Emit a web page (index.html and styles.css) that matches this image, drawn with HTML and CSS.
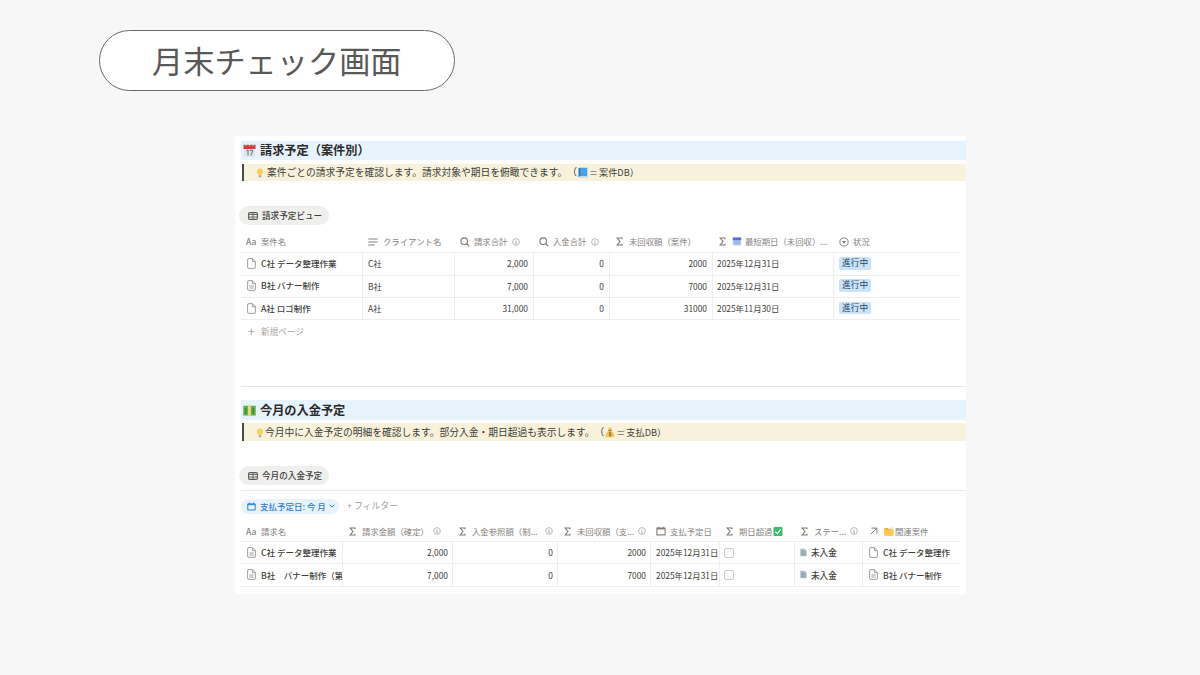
FILE: index.html
```html
<!DOCTYPE html>
<html lang="ja">
<head>
    <meta charset="UTF-8">
    <meta name="viewport" content="width=device-width, initial-scale=1.0">
    <title>月末チェック画面</title>
    <link rel="stylesheet" href="styles.css">
</head>
<body>
    <!-- Shared icons -->
    <svg class="sprite" width="0" height="0">
        <symbol id="calendar" viewBox="0 0 13 13"><path d="M1 3h11v9.700H1z" fill="#dfe4e9"/><path d="M.5 .8h12v4.200H.5z" fill="#e0313f"/><path d="M3 .3v2M6.500 .3v2M10 .3v2" stroke="#f4c9cc" stroke-width=".8"/><path d="M3.500 6.700l1.500-.7v5.500M6.700 6.300h3L8 11.500" fill="none" stroke="#65717b" stroke-width="1"/></symbol>
        <symbol id="bulb" viewBox="0 0 8 10"><path d="M4 .4a3.200 3.200 0 0 0-2 5.700l.5 1.200h3l.5-1.200A3.200 3.200 0 0 0 4 .4z" fill="#fbcf5a"/><path d="M2.700 7.300h2.600v1.500L4 9.700 2.700 8.800z" fill="#91b1c4"/></symbol>
        <symbol id="book" viewBox="0 0 10 11"><path d="M1.500 .8h7.800v9.400H1.200z" fill="#49a3e8"/><path d="M.5 1h1.800v9H.5z" fill="#2577bd"/><path d="M1.500 9h7.800v1H1.500z" fill="#b9def5"/></symbol>
        <symbol id="cash" viewBox="0 0 13 11"><path d="M.3 .8h12.400v9.700H.3z" fill="#5fac46"/><path d="M4.900 .5h3v10.200h-3z" fill="#ead978"/><path d="M2.700 3v6M10.300 3v6" stroke="#3f8732" stroke-width="1.300"/></symbol>
        <symbol id="moneybag" viewBox="0 0 9 10"><path d="M3 .5h3L5.500 3C8 5 9 7 8.300 9.300H.7C0 7 1 5 3.500 3z" fill="#f3c65b"/><path d="M3 3h3" stroke="#9a7434"/><path d="M5.600 5.200H3.900v1.300h1.500v1.400H3.500M4.500 4.500v4" fill="none" stroke="#8a6c39" stroke-width=".7"/></symbol>
        <symbol id="grid" viewBox="0 0 10 8"><rect x=".6" y=".6" width="8.800" height="6.800" rx="1.200" fill="none" stroke="#5d5b57" stroke-width="1.100"/><path d="M.6 2.500h8.800M.6 5h8.800M5 .6v6.800" stroke="#5d5b57" stroke-width=".9"/></symbol>
        <symbol id="lines" viewBox="0 0 10 8"><path d="M.3 1h9.300M.3 4h9.300M.3 7h6.400" stroke="#85827e" stroke-width="1"/></symbol>
        <symbol id="search" viewBox="0 0 10 10"><circle cx="4.200" cy="4.200" r="3.300" fill="none" stroke="#7d7a76" stroke-width="1.100"/><path d="M6.700 6.700L9.300 9.300" stroke="#7d7a76" stroke-width="1.200"/></symbol>
        <symbol id="sigma" viewBox="0 0 7 9"><path d="M6 2.200V1H1.200l2.800 3.500L1.200 8H6V6.800" fill="none" stroke="#7d7a76" stroke-width="1.150"/></symbol>
        <symbol id="info" viewBox="0 0 8 8"><circle cx="4" cy="4" r="3.400" fill="none" stroke="#a09d99" stroke-width=".7"/><path d="M3.300 3.600H4v2.200M3.200 5.800h1.700M4 1.900v.8" fill="none" stroke="#a09d99" stroke-width=".7"/></symbol>
        <symbol id="target" viewBox="0 0 10 10"><circle cx="5" cy="5" r="4.100" fill="none" stroke="#7d7a76" stroke-width=".9"/><path d="M3 4h4L5 6.700z" fill="#7d7a76"/></symbol>
        <symbol id="page" viewBox="0 0 9 11"><path d="M5.400 .6H2A1.300 1.300 0 0 0 .6 2v7A1.300 1.300 0 0 0 2 10.400h5A1.300 1.300 0 0 0 8.400 9V3.700zM5.400 .6v3.100h3" fill="none" stroke="#979490" stroke-width=".9"/></symbol>
        <symbol id="doc" viewBox="0 0 9 11"><path d="M5.400 .6H2A1.300 1.300 0 0 0 .6 2v7A1.300 1.300 0 0 0 2 10.400h5A1.300 1.300 0 0 0 8.400 9V3.700zM5.400 .6v3.100h3M2.300 6h4.400M2.300 8h4.400" fill="none" stroke="#979490" stroke-width=".9"/></symbol>
        <symbol id="date" viewBox="0 0 10 9"><path d="M.9 1.600h8.200v6.800H.9zM.9 2.500h8.200M2.800 .2v2M7.200 .2v2" fill="none" stroke="currentColor" stroke-width="1.100"/></symbol>
        <symbol id="minical" viewBox="0 0 9 9"><path d="M.3 .5h8.400v8H.3z" fill="#b5cff3"/><path d="M.3 .5h8.400v2.800H.3z" fill="#6467d8"/><path d="M1.500 4.800h6M1.500 6.500h6" stroke="#7aa6e5" stroke-width=".8"/></symbol>
        <symbol id="check" viewBox="0 0 9 9"><rect width="9" height="9" rx="1" fill="#35bd69"/><path d="M1.900 4.700l2 1.900L7.200 2.400" fill="none" stroke="#fff" stroke-width="1.200"/></symbol>
        <symbol id="arrow" viewBox="0 0 8 8"><path d="M.8 7.200L6.800 1.200M1.500 1.100h5.400v5.400" fill="none" stroke="#7d7a76" stroke-width="1"/></symbol>
        <symbol id="folder" viewBox="0 0 10 9"><path d="M.4 1h3.500l1 1H9v6.500H.4z" fill="#f4ae35"/><path d="M6 .5h3v2H6z" fill="#e7e5d9"/><path d="M.4 3h9.200v5.500H.4z" fill="#fbc64b"/></symbol>
        <symbol id="status" viewBox="0 0 7 9"><path d="M.3 .8h4.300l2 2v5.500H.3z" fill="#a9bbc2"/><path d="M1.300 3.300h3.500M1.300 5h4.300M1.300 6.700h4.300" stroke="#7796a3" stroke-width=".6"/></symbol>
    </svg>

    <h1 class="page-title">月末チェック画面</h1>

    <main class="board">
        <section class="billing">
            <h2 class="heading"><svg class="i13"><use href="#calendar"/></svg>請求予定（案件別）</h2>
            <p class="note"><svg class="bulb"><use href="#bulb"/></svg><span class="gap-l">案件ごとの請求予定を確認します。請求対象や期日を俯瞰できます。（</span><svg class="book"><use href="#book"/></svg><span class="equals">＝</span><span class="db">案件DB）</span></p>
            <div class="view-tab"><svg class="grid-icon"><use href="#grid"/></svg>請求予定ビュー</div>

            <div class="table projects">
                <div class="row head">
                    <div><b class="aa">Aa</b>案件名</div>
                    <div><svg class="type wide"><use href="#lines"/></svg>クライアント名</div>
                    <div><svg class="type"><use href="#search"/></svg>請求合計<svg class="info"><use href="#info"/></svg></div>
                    <div><svg class="type"><use href="#search"/></svg>入金合計<svg class="info"><use href="#info"/></svg></div>
                    <div><svg class="sigma"><use href="#sigma"/></svg>未回収額（案件）</div>
                    <div><svg class="sigma"><use href="#sigma"/></svg><svg class="emoji"><use href="#minical"/></svg>最短期日（未回収）...</div>
                    <div><svg class="type"><use href="#target"/></svg>状況</div>
                </div>
                <div class="row">
                    <div class="name"><svg class="file"><use href="#page"/></svg>C社 データ整理作業</div>
                    <div>C社</div><div class="num">2,000</div><div class="num">0</div><div class="num">2000</div><div class="day">2025年12月31日</div>
                    <div><span class="tag">進行中</span></div>
                </div>
                <div class="row">
                    <div class="name"><svg class="file"><use href="#doc"/></svg>B社 バナー制作</div>
                    <div>B社</div><div class="num">7,000</div><div class="num">0</div><div class="num">7000</div><div class="day">2025年12月31日</div>
                    <div><span class="tag">進行中</span></div>
                </div>
                <div class="row">
                    <div class="name"><svg class="file"><use href="#page"/></svg>A社 ロゴ制作</div>
                    <div>A社</div><div class="num">31,000</div><div class="num">0</div><div class="num">31000</div><div class="day">2025年11月30日</div>
                    <div><span class="tag">進行中</span></div>
                </div>
            </div>
            <div class="new-page"><span class="plus">+</span>新規ページ</div>
        </section>

        <section class="payments">
            <h2 class="heading"><svg class="i13"><use href="#cash"/></svg>今月の入金予定</h2>
            <p class="note"><svg class="bulb"><use href="#bulb"/></svg><span>今月中に入金予定の明細を確認します。部分入金・期日超過も表示します。（</span><svg class="book"><use href="#moneybag"/></svg><span class="equals">＝</span><span class="db">支払DB）</span></p>
            <div class="view-tab"><svg class="grid-icon"><use href="#grid"/></svg>今月の入金予定</div>

            <div class="filters">
                <span class="chip"><svg class="chip-icon"><use href="#date"/></svg>支払予定日: 今 月<svg class="chevron" viewBox="0 0 6 4"><path d="M.7 .7L3 3 5.300 .7" fill="none" stroke="#2b7fd0" stroke-width=".9"/></svg></span>
                <span class="add-filter">+ フィルター</span>
            </div>

            <div class="table dues">
                <div class="row head">
                    <div><b class="aa">Aa</b>請求名</div>
                    <div><svg class="sigma"><use href="#sigma"/></svg>請求金額（確定）<svg class="info"><use href="#info"/></svg></div>
                    <div><svg class="sigma"><use href="#sigma"/></svg>入金参照額（制...<svg class="info push"><use href="#info"/></svg></div>
                    <div><svg class="sigma"><use href="#sigma"/></svg>未回収額（支...<svg class="info push"><use href="#info"/></svg></div>
                    <div><svg class="type"><use href="#date"/></svg>支払予定日</div>
                    <div><svg class="sigma"><use href="#sigma"/></svg>期日超過<svg class="emoji"><use href="#check"/></svg></div>
                    <div><svg class="sigma"><use href="#sigma"/></svg>ステー...<svg class="info push"><use href="#info"/></svg></div>
                    <div><svg class="arrow"><use href="#arrow"/></svg><svg class="folder"><use href="#folder"/></svg>関連案件</div>
                </div>
                <div class="row">
                    <div class="name"><svg class="file"><use href="#doc"/></svg>C社 データ整理作業</div>
                    <div class="num">2,000</div><div class="num">0</div><div class="num">2000</div><div>2025年12月31日</div>
                    <div><i class="checkbox"></i></div>
                    <div class="state"><svg class="status"><use href="#status"/></svg>未入金</div>
                    <div class="name"><svg class="file"><use href="#page"/></svg>C社 データ整理作</div>
                </div>
                <div class="row">
                    <div class="name"><svg class="file"><use href="#doc"/></svg>B社　バナー制作（第</div>
                    <div class="num">7,000</div><div class="num">0</div><div class="num">7000</div><div>2025年12月31日</div>
                    <div><i class="checkbox"></i></div>
                    <div class="state"><svg class="status"><use href="#status"/></svg>未入金</div>
                    <div class="name"><svg class="file"><use href="#doc"/></svg>B社 バナー制作</div>
                </div>
            </div>
        </section>
    </main>
</body>
</html>
```
FILE: styles.css
```css
* {
    box-sizing: border-box;
}

body {
    margin: 0;
    height: 675px;
    padding: 30px 0 0 99px;
    overflow: hidden;
    background: #f7f7f7;
    color: #403e3a;
    font-family: "Noto Sans CJK JP", "Noto Sans", sans-serif;
    font-size: 8.4px;
    line-height: 1;
}

svg {
    display: block;
    flex: none;
}

.sprite {
    position: absolute;
}

.page-title {
    display: flex;
    align-items: center;
    width: 356px;
    height: 61px;
    margin: 0;
    padding: 0 0 1px 52px;
    border: 1px solid #6a6a6a;
    border-radius: 31px;
    background: #fff;
    color: #585858;
    font-size: 31.2px;
    font-weight: 400;
}

.board {
    width: 731px;
    height: 458px;
    margin: 45px 0 0 136px;
    padding: 5px 0 0 6px;
    background: #fff;
}

.billing {
    height: 246px;
    margin-bottom: 13px;
    border-bottom: 1px solid #e6e6e6;
}

.heading {
    display: flex;
    align-items: center;
    gap: 4px;
    height: 19px;
    margin: 0 0 4px;
    padding-left: 2px;
    background: #e6f2fc;
    color: #2c2c2b;
    font-size: 12.2px;
    font-weight: 700;
}

.payments .heading {
    height: 20px;
    margin-bottom: 3px;
}

.i13 {
    width: 13px;
    height: 13px;
}

/* Callout under each heading */
.note {
    display: flex;
    align-items: center;
    height: 17px;
    margin: 0 0 25px 1px;
    padding-left: 12px;
    border-left: 2px solid #4c4a45;
    background: #f8f2dc;
    font-size: 9.75px;
    white-space: nowrap;
    text-spacing-trim: space-all;
}

.payments .note {
    height: 18px;
    padding-top: 1px;
}

.bulb {
    width: 8px;
    height: 10px;
    margin-right: 1px;
}

.gap-l {
    padding-left: 2px;
}

.book {
    width: 10px;
    height: 11px;
    margin-left: 1px;
}

.equals {
    width: 11px;
    font-size: 8.5px;
    text-align: center;
}

.db {
    font-size: 9.2px;
}

.view-tab {
    display: flex;
    align-items: center;
    width: 90px;
    height: 19px;
    margin-left: -2px;
    padding-left: 9px;
    border-radius: 10px;
    background: #efefee;
    font-size: 8.6px;
    font-weight: 500;
    white-space: nowrap;
}

.grid-icon {
    width: 10px;
    height: 8px;
    margin-right: 4px;
}

/* Tables */
.table {
    width: 719px;
}

.projects {
    margin-top: 6px;
}

.row {
    display: grid;
    height: 22.3px;
    border-bottom: 1px solid #eeeeed;
}

.projects .row {
    grid-template-columns: 122px 92px 79px 76px 103px 121px 1fr;
}

.dues .row {
    grid-template-columns: 102px 110px 105px 93px 69px 75px 68px 1fr;
}

.row > div {
    display: flex;
    align-items: center;
    min-width: 0;
    padding: 0 5px;
    border-right: 1px solid #eeeeed;
    overflow: hidden;
    white-space: nowrap;
}

.row > div:last-child {
    border-right: 0;
}

.row.head > div {
    border-right: 0;
    color: #85827e;
}

.projects .row:not(.head) > div {
    padding-bottom: 1px;
}

.row > .num {
    justify-content: flex-end;
}

.dues .num {
    padding-right: 4px;
}

.row > .name {
    padding: 0 0 0 6px;
    font-size: 8.5px;
    font-weight: 500;
}

.row > .day {
    padding-left: 4px;
}

.row > .state {
    font-size: 8.6px;
    font-weight: 500;
}

.aa {
    width: 15px;
    font-size: 8.5px;
    font-weight: 500;
}

.type {
    width: 10px;
    height: 10px;
    margin-right: 4px;
}

.wide {
    height: 8px;
    margin-right: 5px;
}

.sigma {
    width: 7px;
    height: 9px;
    margin: 0 6px 0 1px;
}

.emoji {
    width: 10px;
    height: 9px;
    margin-right: 3px;
}

.info {
    width: 8px;
    height: 8px;
    margin-left: 4px;
}

.info.push {
    margin-left: auto;
}

.file {
    width: 9px;
    height: 11px;
    margin-right: 5px;
}

.tag {
    padding: 2px 3px;
    border-radius: 2px;
    background: #cbe3f7;
    color: #244a6b;
    font-size: 8.7px;
}

.new-page {
    display: flex;
    align-items: center;
    height: 22px;
    padding-left: 7px;
    color: #a5a3a0;
    font-size: 8.6px;
}

.plus {
    width: 13px;
    font-size: 12px;
}

.filters {
    display: flex;
    align-items: center;
    gap: 8px;
    height: 31px;
    margin-top: 5px;
    border-top: 1px solid #e8e8e7;
}

.chip {
    display: flex;
    align-items: center;
    width: 98px;
    height: 15px;
    padding-left: 6px;
    border-radius: 8px;
    background: #e8f2fb;
    color: #2b7fd0;
    font-size: 8.5px;
    font-weight: 500;
    white-space: nowrap;
}

.chip-icon {
    width: 9px;
    height: 9px;
    margin-right: 4px;
}

.chevron {
    width: 6px;
    height: 4px;
    margin-left: 3px;
}

.add-filter {
    color: #a09e9a;
    font-size: 8.9px;
}

.dues .head {
    height: 21px;
}

.checkbox {
    width: 10px;
    height: 10px;
    margin-left: -1px;
    border: 1px solid #cfcecb;
    border-radius: 2px;
}

.status {
    width: 7px;
    height: 9px;
    margin-right: 4px;
}

.arrow {
    width: 8px;
    height: 8px;
    margin: 0 6px 0 2px;
}

.folder {
    width: 10px;
    height: 9px;
    margin-right: 1px;
}
```
